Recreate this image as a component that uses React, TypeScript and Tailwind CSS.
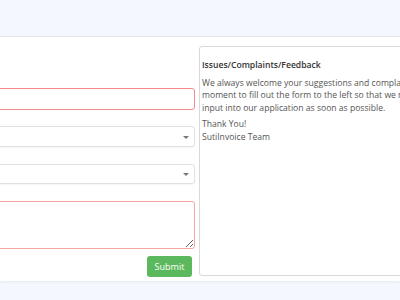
export default function App() {
  return (
    <div
      className="w-[400px] h-[300px] overflow-hidden bg-[#f4f7fd] pt-[36px]"
      style={{ fontFamily: '"Open Sans", "Liberation Sans", sans-serif' }}
    >
      <div className="h-[245px] border-t border-[#e3e6ea] bg-white shadow-[0_1px_2px_rgba(0,0,0,0.06)]">
        <div className="ml-[-80px] flex pt-[9px]">
          <form className="flex w-[275px] shrink-0 flex-col">
            <input className="mt-[42px] h-[22px] w-full rounded-[3px] border border-[#f28b8b] px-2 text-[9px] outline-none" />
            <div className="relative mt-[16px] h-[21px] w-full rounded-[3px] border border-[#e1e1e1] shadow-[0_1px_1px_rgba(0,0,0,0.04)]">
              <span className="absolute right-[5px] top-[9px] h-0 w-0 border-x-[3px] border-t-[3px] border-x-transparent border-t-[#777]" />
            </div>
            <div className="relative mt-[17px] h-[20px] w-full rounded-[3px] border border-[#e1e1e1] shadow-[0_1px_1px_rgba(0,0,0,0.04)]">
              <span className="absolute right-[5px] top-[8px] h-0 w-0 border-x-[3px] border-t-[3px] border-x-transparent border-t-[#777]" />
            </div>
            <textarea className="mt-[17px] h-[48px] w-full rounded-[3px] border border-[#f5a3a3] px-2 text-[9px] outline-none" />
            <div className="mt-[7px] flex justify-end pr-[3px]">
              <button
                type="button"
                className="h-[21px] w-[45px] rounded-[3px] bg-[#5cb85c] text-[9px] text-white"
              >
                Submit
              </button>
            </div>
          </form>
          <div className="ml-[4px] h-[230px] w-[220px] shrink-0 rounded-[3px] border border-[#d9d9d9] px-[2px] pt-[12px] text-[8.6px] leading-[12.7px] text-[#555]">
            <div className="font-semibold text-[#333]">Issues/Complaints/Feedback</div>
            <p className="mt-[5px] whitespace-nowrap">
              We always welcome your suggestions and complaints. Please take a
              <br />
              moment to fill out the form to the left so that we may incorporate your
              <br />
              input into our application as soon as possible.
            </p>
            <p className="mt-[3px]">
              Thank You!
              <br />
              SutiInvoice Team
            </p>
          </div>
        </div>
      </div>
    </div>
  );
}
